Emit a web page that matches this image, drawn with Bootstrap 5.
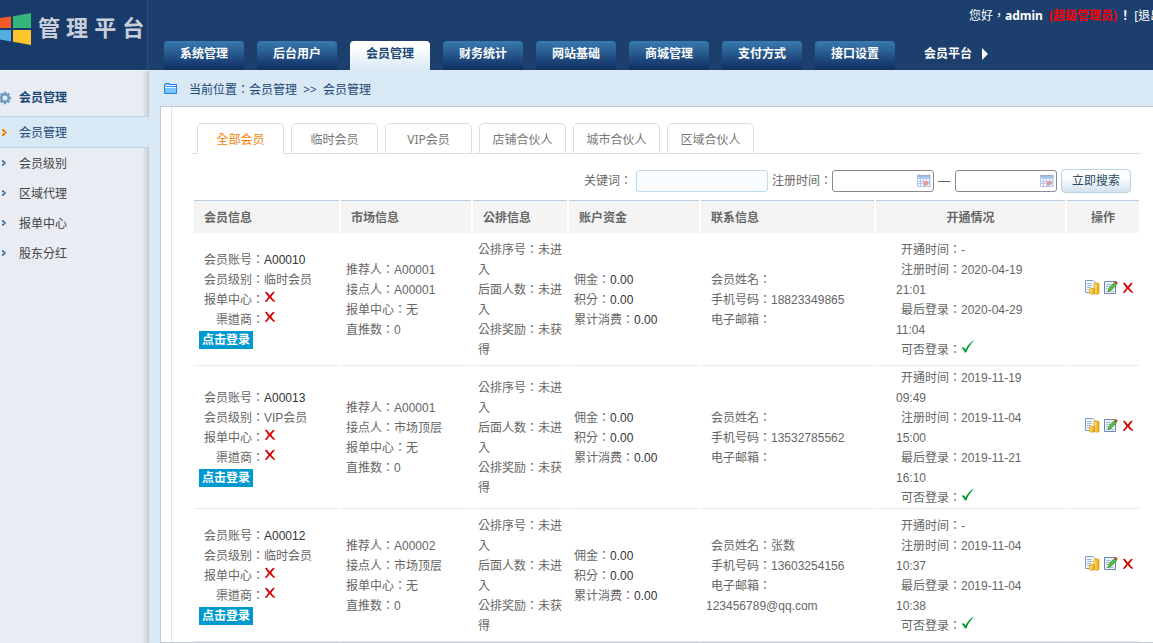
<!DOCTYPE html>
<html>
<head>
<meta charset="utf-8">
<meta name="viewport" content="width=device-width, initial-scale=1">
<title>管理平台</title>
<link href="https://cdn.jsdelivr.net/npm/bootstrap@5.3.0/dist/css/bootstrap.min.css" rel="stylesheet">
<style>
/* the TC face centres full-width punctuation in its cell */
body{font-family:"Liberation Sans","Noto Sans CJK TC","Noto Sans CJK SC",sans-serif;font-size:12px;line-height:20px;color:#666;background:#d9e8f5;overflow-x:hidden}
a{color:inherit;text-decoration:none}
.ui{font-family:"Noto Sans","Noto Sans CJK TC","Noto Sans CJK SC",sans-serif}
.topbar{background:#1c3f6e;height:70px}
.brand{width:148px;border-right:1px solid #2a4f80;background:#193b69;overflow:hidden}
.brand h1{font-size:22px;line-height:30px;font-weight:700;color:#c9cfdb;margin:14px 0 0 6px;white-space:nowrap}
.brand svg{margin-top:13px}
.topuser{width:184px;height:20px;margin-top:6px;color:#fff;white-space:nowrap;overflow:hidden}
.topuser em{font-style:normal;font-weight:700;color:#f00;margin:0 2px 0 3px}
.topnav{gap:13px;padding-left:16px}
.topnav a{display:block;width:80px;height:29px;line-height:26px;text-align:center;color:#fff;font-weight:700;border-radius:4px 4px 0 0;background:linear-gradient(#397bb0,#102c61)}
.topnav a.on{color:#1c4673;background:linear-gradient(#fff 20%,#d9e8f5)}
.topnav a.plain{width:auto;padding-left:16px;background:none}
.topnav svg{vertical-align:-2px}
.side{width:149px;background:linear-gradient(90deg,#e9edf3 142px,#cfd3d9 148px,#c3cbd4 148px)}
.side a{height:30px;padding:2px 0 0 2px;color:#444}
.side svg{width:4px;height:6px;margin:0 13px 2px 0;color:#2c5f95}
.side .side-head{height:46px;padding-top:9px;border-top:1px solid #f4f8fb;color:#1c4673;font-weight:700}
.side .side-head svg{width:12px;height:14px;margin:0 7px 0 0}
.side a.on{height:32px;background:#d9e8f5;border:solid #b5d3ea;border-width:1px 0;color:#1c4673}
.side a.on svg{width:5px;height:7px;margin-right:12px;color:#f77f00}
.crumb{height:36px;padding:3px 0 0 4px;gap:12px;color:#1c4673}
.crumb svg{margin-bottom:2px}
.crumb b{font-weight:400;margin:0 3px}
.main{padding-left:11px;min-width:0}
.panel{background:#fff;border:solid #c0cad6;border-width:1px 0 1px 1px;padding-left:10px}
.panel-in{border-left:1px solid #dde6ee;padding:16px 14px 0 22px}
.tabs{border-bottom:1px solid #ddd;gap:7px;margin:0 -2px;padding-left:5px}
.tabs a{width:87px;height:31px;line-height:32px;border:1px solid #ddd;border-radius:5px 5px 0 0;text-align:center;color:#777;margin-bottom:-1px}
.tabs a.on{color:#f77f00;border-bottom-color:#fff}
.search{height:46px;padding:7px 8px 0 0}
.search input{height:22px;border:1px solid #8a8a8a;border-radius:3px;padding:0 4px;width:102px;background:#fff;font-size:12px}
.search .kw{width:132px;border-color:#bfd9ee;background:#fafdff;margin:0 4px}
.search .cal{position:absolute;right:3px;top:4px}
.search .dash{padding:0 5px 0 4px}
.search button{width:70px;height:24px;margin-left:4px;border:1px solid #b8d3e6;border-radius:4px;background:linear-gradient(#fff 30%,#d3e3ee);color:#264a64;padding:0;line-height:20px}
.members{table-layout:fixed;border-collapse:separate;border-spacing:2px 0;width:calc(100% + 4px);margin:0 -2px}
.members th{height:33px;background:#f4f4f4;border-top:1px solid #bccede;padding:2px 10px 0;font-weight:700;color:#666}
.members td{height:133px;padding:2px 3px 0 5px;border-bottom:1px solid #e6ebf3;vertical-align:middle}
.members td p{margin:0}
.members p svg{vertical-align:1px}
.members .ind{text-indent:5px}
.members .ind2{text-indent:17px}
.members b{font-weight:400;color:#333}
.members td.open{padding:2px 20px 0}
.members td.ops{padding:0 0 23px 18px}
.go{display:inline-block;height:18px;line-height:18px;margin-top:1px;padding:0 3px;background:#0099cf;color:#fff;font-weight:700;vertical-align:top}
</style>
</head>
<body>
<svg width="0" height="0" class="position-absolute" aria-hidden="true">
<defs>
<linearGradient id="gold" x2="1" y2="0"><stop stop-color="#ffe680"/><stop offset="1" stop-color="#e9a50c"/></linearGradient>
<linearGradient id="calg" x2="0" y2="1"><stop stop-color="#8fa8dc"/><stop offset="1" stop-color="#b9cdf2"/></linearGradient>
<symbol id="cross" viewBox="0 0 12 12"><path d="M1 1.200C2.200.4 3 1 3.600 1.800L5.800 4.600 8.600 1.300C9.600.3 10.800.6 10.500 1.400L7.200 5.800C8.500 7.500 9.800 9 11.300 10.200 10.700 11 9.500 11 8.600 10L5.700 7 3.300 10.200C2.500 11.200.9 11.100 1.100 10.200L4.400 6Z" fill="#d40000"/></symbol>
<symbol id="tick" viewBox="0 0 14 13"><path d="M.5 8C2 6.500 3 7 4.500 9.500 6.500 5.500 9.500 2 13.500.3 10 3.500 7.200 7.500 5.200 12.500H3.800C3 10.500 2 9 .5 8Z" fill="#0a9a30"/></symbol>
<symbol id="arr" viewBox="0 0 5 7"><path d="M0 0h2v1h1v1h1v1h1v1H4v1H3v1H2v1H0V5h1V4h2V3H1V2H0Z" fill="currentColor"/></symbol>
<symbol id="coins" viewBox="0 0 15 15"><path d="M.5.5H8l2 2v10H.5Z" fill="#f4f8ff" stroke="#7f9cc6"/><path d="M2 3.500h5M2 5.500h5M2 7.500h4M2 9.500h3" stroke="#a5b8d3"/><path d="M9 3.500q2.500-1.500 5 0v10q-2.500 1.500-5 0Z" fill="url(#gold)" stroke="#d9970d" stroke-width=".7"/><path d="M4.500 9q2.500-1.500 5 0v4.500q-2.500 1.500-5 0Z" fill="url(#gold)" stroke="#d9970d" stroke-width=".7"/></symbol>
<symbol id="edit" viewBox="0 0 14 15"><path d="M.5 1.500h11v12H.5Z" fill="#eef3fb" stroke="#6d87b3"/><path d="M2 4.500h5M2 6.500h4M2 8.500h2M2 11.500h8" stroke="#aebcd4"/><path d="M4 11.500 5 8.200 10.300 2.500 12.500 4.500 7.200 10.300Z" fill="#4fc43b" stroke="#25851e" stroke-width=".7"/><path d="M10.300 2.500 11.500 1.200Q13.500 1 13.700 3.200L12.500 4.500Z" fill="#d6402c"/></symbol>
<symbol id="cal" viewBox="0 0 14 14"><path d="M0 1h13.500v12H0Z" fill="#b4c6ee"/><path d="M0 1h13.500v3H0Z" fill="url(#calg)"/><path d="M1 5h2v2H1zM4 5h2v2H4zM7 5h2v2H7zM10 5h2v2h-2zM1 8h2v1H1zM4 8h2v1H4zM1 10h2v2H1zM4 10h2v2H4zM10 10h2v2h-2z" fill="#f7faff"/><path d="M7 7h4v4H7z" fill="#f09a88"/><path d="M2 0v2M11 0v2" stroke="#cbb8bd"/></symbol>
</defs>
</svg>

<header class="topbar d-flex">
  <div class="brand d-flex flex-shrink-0">
    <svg class="flex-shrink-0" width="32" height="33" viewBox="0 0 32 33" aria-hidden="true"><path d="M0 5 11 3.500V15H0Z" fill="#f25a28"/><path d="M13 3.200 31 0V15H13Z" fill="#36b57b"/><path d="M0 17H11V28.500L0 26.500Z" fill="#55aede"/><path d="M13 17H31V32L13 28.800Z" fill="#ffc52c"/></svg>
    <h1>管 理 平 台</h1>
  </div>
  <div class="flex-grow-1 d-flex flex-column justify-content-between">
    <div class="topuser ui ms-auto">您好，<strong>admin</strong> <em>(超级管理员)</em><strong>！</strong> <a href="#">[退出]</a></div>
    <nav class="topnav d-flex">
      <a href="#">系统管理</a><a href="#">后台用户</a><a href="#" class="on">会员管理</a><a href="#">财务统计</a><a href="#">网站基础</a><a href="#">商城管理</a><a href="#">支付方式</a><a href="#">接口设置</a>
      <a href="#" class="plain text-nowrap">会员平台<svg class="ms-2" width="9" height="12" viewBox="0 0 9 12" aria-hidden="true"><path d="M2 0 8 6 2 12Z" fill="#fff"/></svg></a>
    </nav>
  </div>
</header>

<div class="d-flex">
  <nav class="side flex-shrink-0">
    <div class="side-head d-flex align-items-center"><svg viewBox="0 0 12 14" aria-hidden="true"><g fill="none" stroke="#6b9bc4"><circle cx="5" cy="7" r="3.700" stroke-width="2.400"/><path d="M5 .8v2M5 11.200v2M-1.200 7h2M9.200 7h2M.6 2.600 2 4M8 10l1.400 1.400M.6 11.400 2 10M8 4l1.400-1.400" stroke-width="2.400"/></g></svg>会员管理</div>
    <a href="#" class="on d-flex align-items-center"><svg aria-hidden="true"><use href="#arr"/></svg>会员管理</a>
    <a href="#" class="d-flex align-items-center"><svg aria-hidden="true"><use href="#arr"/></svg>会员级别</a>
    <a href="#" class="d-flex align-items-center"><svg aria-hidden="true"><use href="#arr"/></svg>区域代理</a>
    <a href="#" class="d-flex align-items-center"><svg aria-hidden="true"><use href="#arr"/></svg>报单中心</a>
    <a href="#" class="d-flex align-items-center"><svg aria-hidden="true"><use href="#arr"/></svg>股东分红</a>
  </nav>

  <main class="main flex-grow-1">
    <div class="crumb ui d-flex align-items-center">
      <svg width="13" height="11" viewBox="0 0 13 11" aria-hidden="true"><path d="M.5 10.500V1.500h1V.5h4v1h7v9Z" fill="#7cc4ff" stroke="#1f7fe8"/><path d="M1 2.500h11M1 4.500h11" stroke="#e5f5ff"/><path d="M2 3.500h10.500" stroke="#2d8df0"/></svg>
      <span>当前位置：会员管理 <b>&gt;&gt;</b> 会员管理</span>
    </div>
    <div class="panel">
      <div class="panel-in">
        <nav class="tabs d-flex ui">
          <a href="#" class="on">全部会员</a><a href="#">临时会员</a><a href="#">VIP会员</a><a href="#">店铺合伙人</a><a href="#">城市合伙人</a><a href="#">区域合伙人</a>
        </nav>
        <form class="search d-flex justify-content-end align-items-center">
          <label for="kw">关键词：</label><input id="kw" class="kw" type="text">
          <label for="from">注册时间：</label>
          <span class="position-relative d-flex"><input id="from" type="text"><svg class="cal" width="14" height="14" aria-hidden="true"><use href="#cal"/></svg></span>
          <label for="to" class="dash">—</label>
          <span class="position-relative d-flex"><input id="to" type="text"><svg class="cal" width="14" height="14" aria-hidden="true"><use href="#cal"/></svg></span>
          <button type="button">立即搜索</button>
        </form>
        <table class="members">
          <colgroup><col style="width:145px"><col style="width:130px"><col style="width:94px"><col style="width:130px"><col style="width:173px"><col style="width:189px"><col style="width:72px"></colgroup>
          <thead><tr><th>会员信息</th><th>市场信息</th><th>公排信息</th><th>账户资金</th><th>联系信息</th><th class="text-center">开通情况</th><th class="text-center">操作</th></tr></thead>
          <tbody>
            <tr>
              <td><p class="ind">会员账号：<b>A00010</b></p><p class="ind">会员级别：临时会员</p><p class="ind">报单中心：<svg width="12" height="12"><use href="#cross"/></svg></p><p class="ind2">渠道商：<svg width="12" height="12"><use href="#cross"/></svg></p><p><a class="go" href="#">点击登录</a></p></td>
              <td><p>推荐人：A00001</p><p>接点人：A00001</p><p>报单中心：无</p><p>直推数：0</p></td>
              <td><p>公排序号：未进入</p><p>后面人数：未进入</p><p>公排奖励：未获得</p></td>
              <td><p>佣金：<b>0.00</b></p><p>积分：<b>0.00</b></p><p>累计消费：<b>0.00</b></p></td>
              <td><p class="ind">会员姓名：</p><p class="ind">手机号码：18823349865</p><p class="ind">电子邮箱：</p></td>
              <td class="open"><p class="ind">开通时间：-</p><p class="ind">注册时间：2020-04-19 21:01</p><p class="ind">最后登录：2020-04-29 11:04</p><p class="ind">可否登录：<svg width="14" height="13"><use href="#tick"/></svg></p></td>
              <td class="ops"><div class="d-flex align-items-center gap-1"><a class="d-flex" href="#" aria-label="资金"><svg width="15" height="15"><use href="#coins"/></svg></a><a class="d-flex" href="#" aria-label="编辑"><svg width="14" height="15"><use href="#edit"/></svg></a><a class="d-flex" href="#" aria-label="删除"><svg width="12" height="12"><use href="#cross"/></svg></a></div></td>
            </tr>
            <tr>
              <td><p class="ind">会员账号：<b>A00013</b></p><p class="ind">会员级别：VIP会员</p><p class="ind">报单中心：<svg width="12" height="12"><use href="#cross"/></svg></p><p class="ind2">渠道商：<svg width="12" height="12"><use href="#cross"/></svg></p><p><a class="go" href="#">点击登录</a></p></td>
              <td><p>推荐人：A00001</p><p>接点人：市场顶层</p><p>报单中心：无</p><p>直推数：0</p></td>
              <td><p>公排序号：未进入</p><p>后面人数：未进入</p><p>公排奖励：未获得</p></td>
              <td><p>佣金：<b>0.00</b></p><p>积分：<b>0.00</b></p><p>累计消费：<b>0.00</b></p></td>
              <td><p class="ind">会员姓名：</p><p class="ind">手机号码：13532785562</p><p class="ind">电子邮箱：</p></td>
              <td class="open"><p class="ind">开通时间：2019-11-19 09:49</p><p class="ind">注册时间：2019-11-04 15:00</p><p class="ind">最后登录：2019-11-21 16:10</p><p class="ind">可否登录：<svg width="14" height="13"><use href="#tick"/></svg></p></td>
              <td class="ops"><div class="d-flex align-items-center gap-1"><a class="d-flex" href="#" aria-label="资金"><svg width="15" height="15"><use href="#coins"/></svg></a><a class="d-flex" href="#" aria-label="编辑"><svg width="14" height="15"><use href="#edit"/></svg></a><a class="d-flex" href="#" aria-label="删除"><svg width="12" height="12"><use href="#cross"/></svg></a></div></td>
            </tr>
            <tr>
              <td><p class="ind">会员账号：<b>A00012</b></p><p class="ind">会员级别：临时会员</p><p class="ind">报单中心：<svg width="12" height="12"><use href="#cross"/></svg></p><p class="ind2">渠道商：<svg width="12" height="12"><use href="#cross"/></svg></p><p><a class="go" href="#">点击登录</a></p></td>
              <td><p>推荐人：A00002</p><p>接点人：市场顶层</p><p>报单中心：无</p><p>直推数：0</p></td>
              <td><p>公排序号：未进入</p><p>后面人数：未进入</p><p>公排奖励：未获得</p></td>
              <td><p>佣金：<b>0.00</b></p><p>积分：<b>0.00</b></p><p>累计消费：<b>0.00</b></p></td>
              <td><p class="ind">会员姓名：张数</p><p class="ind">手机号码：13603254156</p><p class="ind">电子邮箱：<br>123456789@qq.com</p></td>
              <td class="open"><p class="ind">开通时间：-</p><p class="ind">注册时间：2019-11-04 10:37</p><p class="ind">最后登录：2019-11-04 10:38</p><p class="ind">可否登录：<svg width="14" height="13"><use href="#tick"/></svg></p></td>
              <td class="ops"><div class="d-flex align-items-center gap-1"><a class="d-flex" href="#" aria-label="资金"><svg width="15" height="15"><use href="#coins"/></svg></a><a class="d-flex" href="#" aria-label="编辑"><svg width="14" height="15"><use href="#edit"/></svg></a><a class="d-flex" href="#" aria-label="删除"><svg width="12" height="12"><use href="#cross"/></svg></a></div></td>
            </tr>
          </tbody>
        </table>
      </div>
    </div>
  </main>
</div>
<script src="https://cdn.jsdelivr.net/npm/bootstrap@5.3.0/dist/js/bootstrap.bundle.min.js"></script>
</body>
</html>
